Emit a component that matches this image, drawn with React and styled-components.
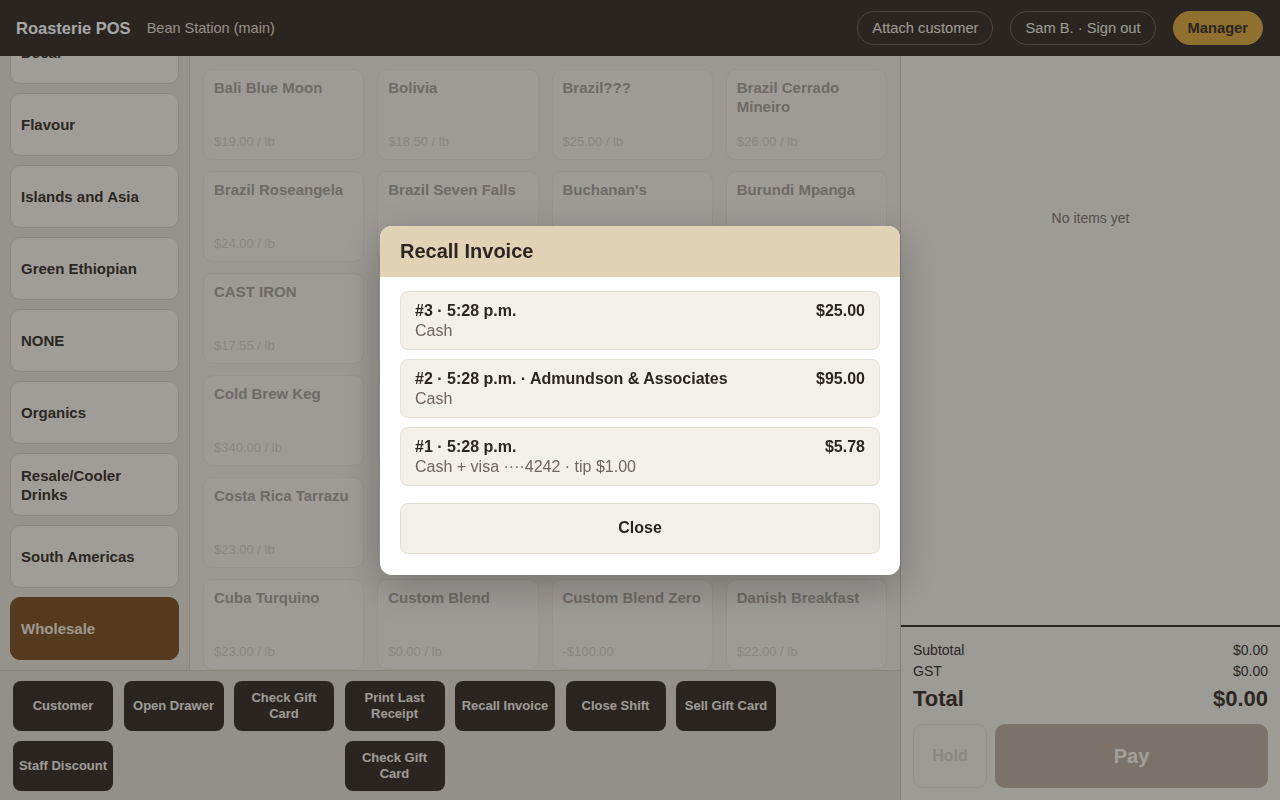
import { useLayoutEffect, useRef } from "react";
import styled, { createGlobalStyle } from "styled-components";

const categories = [
  "All",
  "Blends",
  "Central Americas",
  "Decaf",
  "Flavour",
  "Islands and Asia",
  "Green Ethiopian",
  "NONE",
  "Organics",
  "Resale/Cooler Drinks",
  "South Americas",
  "Wholesale",
];

const products = [
  ["Bali Blue Moon", "$19.00 / lb"],
  ["Bolivia", "$18.50 / lb"],
  ["Brazil???", "$25.00 / lb"],
  ["Brazil Cerrado Mineiro", "$26.00 / lb"],
  ["Brazil Roseangela", "$24.00 / lb"],
  ["Brazil Seven Falls", "$24.00 / lb"],
  ["Buchanan's", "$21.00 / lb"],
  ["Burundi Mpanga", "$25.00 / lb"],
  ["CAST IRON", "$17.55 / lb"],
  ["Colombia Huila", "$22.00 / lb"],
  ["Colombia Decaf", "$23.00 / lb"],
  ["Congo Kivu", "$24.00 / lb"],
  ["Cold Brew Keg", "$340.00 / lb"],
  ["Colombia Supremo", "$21.00 / lb"],
  ["Costa Rica", "$23.00 / lb"],
  ["Costa Rica Honey", "$25.00 / lb"],
  ["Costa Rica Tarrazu", "$23.00 / lb"],
  ["Cowboy Blend", "$20.00 / lb"],
  ["Crema Blend", "$21.00 / lb"],
  ["Cuba Serrano", "$26.00 / lb"],
  ["Cuba Turquino", "$23.00 / lb"],
  ["Custom Blend", "$0.00 / lb"],
  ["Custom Blend Zero", "-$100.00"],
  ["Danish Breakfast", "$22.00 / lb"],
  ["Dark Roast", "$20.00 / lb"],
  ["Decaf Mexico", "$23.00 / lb"],
  ["El Salvador", "$22.00 / lb"],
  ["Espresso Blend", "$21.00 / lb"],
];

const actions = [
  { label: "Customer" },
  { label: "Open Drawer" },
  { label: "Check Gift Card" },
  { label: "Print Last Receipt" },
  { label: "Recall Invoice" },
  { label: "Close Shift" },
  { label: "Sell Gift Card" },
  { label: "Staff Discount", col: 1 },
  { label: "Check Gift Card", col: 4 },
];

const invoices = [
  { title: "#3 · 5:28 p.m.", sub: "Cash", amount: "$25.00" },
  { title: "#2 · 5:28 p.m. · Admundson & Associates", sub: "Cash", amount: "$95.00" },
  { title: "#1 · 5:28 p.m.", sub: "Cash + visa ····4242 · tip $1.00", amount: "$5.78" },
];

export default function App() {
  const sidebarRef = useRef(null);

  // category list sits scrolled to the bottom so Wholesale is in view
  useLayoutEffect(() => {
    const el = sidebarRef.current;
    if (el) el.scrollTop = el.scrollHeight;
  }, []);

  return (
    <>
      <GlobalStyle />
      <Page>
        <TopBar>
          <Brand>Roasterie POS</Brand>
          <Location>Bean Station (main)</Location>
          <HeaderActions>
            <PillButton>Attach customer</PillButton>
            <PillButton>Sam B. · Sign out</PillButton>
            <PillButton $accent>Manager</PillButton>
          </HeaderActions>
        </TopBar>

        <Body>
          <Workspace>
            <Browse>
              <Sidebar ref={sidebarRef}>
                <CategoryList>
                  {categories.map((c) => (
                    <CategoryButton key={c} $active={c === "Wholesale"}>
                      {c}
                    </CategoryButton>
                  ))}
                </CategoryList>
              </Sidebar>
              <ProductGrid>
                {products.map(([name, price]) => (
                  <ProductCard key={name}>
                    <ProductName>{name}</ProductName>
                    <ProductPrice>{price}</ProductPrice>
                  </ProductCard>
                ))}
              </ProductGrid>
            </Browse>
            <ActionBar>
              {actions.map((a, i) => (
                <ActionButton key={i} $col={a.col}>
                  {a.label}
                </ActionButton>
              ))}
            </ActionBar>
          </Workspace>

          <Cart>
            <EmptyState>No items yet</EmptyState>
            <Totals>
              <TotalRow>
                <span>Subtotal</span>
                <span>$0.00</span>
              </TotalRow>
              <TotalRow>
                <span>GST</span>
                <span>$0.00</span>
              </TotalRow>
              <TotalRow $grand>
                <span>Total</span>
                <span>$0.00</span>
              </TotalRow>
              <CartActions>
                <HoldButton>Hold</HoldButton>
                <PayButton>Pay</PayButton>
              </CartActions>
            </Totals>
          </Cart>
        </Body>
      </Page>

      <Overlay>
        <Dialog>
          <DialogHeader>Recall Invoice</DialogHeader>
          <DialogBody>
            {invoices.map((inv) => (
              <InvoiceRow key={inv.title}>
                <InvoiceTop>
                  <span>{inv.title}</span>
                  <span>{inv.amount}</span>
                </InvoiceTop>
                <InvoiceSub>{inv.sub}</InvoiceSub>
              </InvoiceRow>
            ))}
            <CloseButton>Close</CloseButton>
          </DialogBody>
        </Dialog>
      </Overlay>
    </>
  );
}

const GlobalStyle = createGlobalStyle`
  * { box-sizing: border-box; }
  html, body { margin: 0; height: 100%; }
  body {
    font-family: "Liberation Sans", Arial, sans-serif;
    background: #eeeae2;
    overflow: hidden;
  }
  button { font-family: inherit; cursor: pointer; }
`;

const Page = styled.div`
  height: 100vh;
  display: flex;
  flex-direction: column;
`;

const TopBar = styled.header`
  height: 56px;
  flex-shrink: 0;
  background: #423a33;
  display: flex;
  align-items: center;
  padding: 0 17px 0 16px;
`;

const Brand = styled.div`
  color: #ffffff;
  font-size: 16.5px;
  font-weight: 700;
`;

const Location = styled.div`
  color: #e4ddd1;
  font-size: 14.5px;
  margin-left: 16px;
`;

const HeaderActions = styled.div`
  margin-left: auto;
  display: flex;
  gap: 17px;
`;

const PillButton = styled.button`
  height: 34px;
  padding: 0 14px;
  border-radius: 17px;
  font-size: 14.7px;
  font-weight: ${(p) => (p.$accent ? 700 : 400)};
  color: ${(p) => (p.$accent ? "#433a30" : "#f1ebe1")};
  background: ${(p) => (p.$accent ? "#dcac49" : "transparent")};
  border: 1px solid ${(p) => (p.$accent ? "#dcac49" : "#776d62")};
`;

const Body = styled.div`
  flex: 1;
  display: flex;
  min-height: 0;
`;

const Workspace = styled.div`
  width: 900px;
  display: flex;
  flex-direction: column;
  min-height: 0;
`;

const Browse = styled.div`
  flex: 1;
  display: flex;
  min-height: 0;
`;

const Sidebar = styled.nav`
  width: 190px;
  flex-shrink: 0;
  background: #e7e1d7;
  border-right: 1px solid #d8cfc4;
  overflow: hidden;
`;

const CategoryList = styled.div`
  display: flex;
  flex-direction: column;
  gap: 9px;
  padding: 10px;
`;

const CategoryButton = styled.button`
  height: 63px;
  flex-shrink: 0;
  display: flex;
  align-items: center;
  text-align: left;
  padding: 0 10px;
  border-radius: 10px;
  font-size: 15px;
  font-weight: 700;
  line-height: 19px;
  color: ${(p) => (p.$active ? "#f2e8d8" : "#443c35")};
  background: ${(p) => (p.$active ? "#835930" : "#f6f2ea")};
  border: 1px solid ${(p) => (p.$active ? "#835930" : "#d9cfc2")};
`;

const ProductGrid = styled.div`
  flex: 1;
  overflow: hidden;
  padding: 13px;
  display: grid;
  grid-template-columns: repeat(4, 1fr);
  grid-auto-rows: 91px;
  column-gap: 13px;
  row-gap: 11px;
  align-content: start;
`;

const ProductCard = styled.div`
  background: #f3efe8;
  border: 1px solid #e6e0d7;
  border-radius: 10px;
  padding: 8px 10px 10px;
  display: flex;
  flex-direction: column;
  justify-content: space-between;
`;

const ProductName = styled.div`
  font-size: 15px;
  font-weight: 700;
  line-height: 19px;
  color: #aaa49b;
`;

const ProductPrice = styled.div`
  font-size: 13px;
  color: #d3cec6;
`;

const ActionBar = styled.div`
  height: 130px;
  flex-shrink: 0;
  background: #e2dcd3;
  border-top: 1px solid #d4ccc0;
  padding: 10px 13px;
  display: grid;
  grid-template-columns: repeat(7, 100px);
  grid-auto-rows: 50px;
  column-gap: 10.5px;
  row-gap: 10px;
  align-content: start;
`;

const ActionButton = styled.button`
  grid-column: ${(p) => p.$col || "auto"};
  border: none;
  border-radius: 8px;
  background: #423a33;
  color: #f3eee6;
  font-size: 13px;
  font-weight: 700;
  line-height: 16px;
  padding: 0 4px;
`;

const Cart = styled.aside`
  flex: 1;
  background: #f2eee7;
  border-left: 1px solid #cbc3b8;
  display: flex;
  flex-direction: column;
`;

const EmptyState = styled.div`
  flex: 1;
  padding-top: 154px;
  text-align: center;
  font-size: 14px;
  color: #837b72;
`;

const Totals = styled.div`
  border-top: 2px solid #3e3731;
  padding: 13px 12px 12px;
`;

const TotalRow = styled.div`
  display: flex;
  justify-content: space-between;
  color: #443c35;
  font-size: ${(p) => (p.$grand ? "22px" : "14px")};
  font-weight: ${(p) => (p.$grand ? 700 : 400)};
  line-height: ${(p) => (p.$grand ? "28px" : "21px")};
  margin-top: ${(p) => (p.$grand ? "3px" : "0")};
`;

const CartActions = styled.div`
  display: flex;
  gap: 8px;
  height: 64px;
  margin-top: 11px;
`;

const HoldButton = styled.button`
  width: 74px;
  background: transparent;
  border: 1px solid #e3ded6;
  border-radius: 10px;
  font-size: 16px;
  font-weight: 700;
  color: #d4cfc7;
`;

const PayButton = styled.button`
  flex: 1;
  border: none;
  border-radius: 10px;
  background: #bdb1a3;
  color: #faf6ef;
  font-size: 20px;
  font-weight: 700;
`;

const Overlay = styled.div`
  position: fixed;
  inset: 0;
  background: rgba(0, 0, 0, 0.35);
  display: flex;
  align-items: center;
  justify-content: center;
`;

const Dialog = styled.div`
  width: 520px;
  background: #ffffff;
  border-radius: 12px;
  overflow: hidden;
  box-shadow: 0 12px 40px rgba(0, 0, 0, 0.25);
`;

const DialogHeader = styled.div`
  height: 51px;
  background: #e2d2b5;
  display: flex;
  align-items: center;
  padding: 0 20px;
  font-size: 20px;
  font-weight: 700;
  color: #2b2621;
`;

const DialogBody = styled.div`
  padding: 14px 20px 21px;
  display: flex;
  flex-direction: column;
  gap: 9px;
`;

const InvoiceRow = styled.div`
  background: #f3efe9;
  border: 1px solid #e6e0d7;
  border-radius: 8px;
  padding: 9px 14px 8px;
  line-height: 20px;
  font-size: 16px;
`;

const InvoiceTop = styled.div`
  display: flex;
  justify-content: space-between;
  font-weight: 700;
  color: #2b2621;
`;

const InvoiceSub = styled.div`
  color: #6f665c;
`;

const CloseButton = styled.button`
  margin-top: 8px;
  height: 51px;
  background: #f3efe9;
  border: 1px solid #e3ddd4;
  border-radius: 8px;
  font-size: 16px;
  font-weight: 700;
  color: #2b2621;
`;
